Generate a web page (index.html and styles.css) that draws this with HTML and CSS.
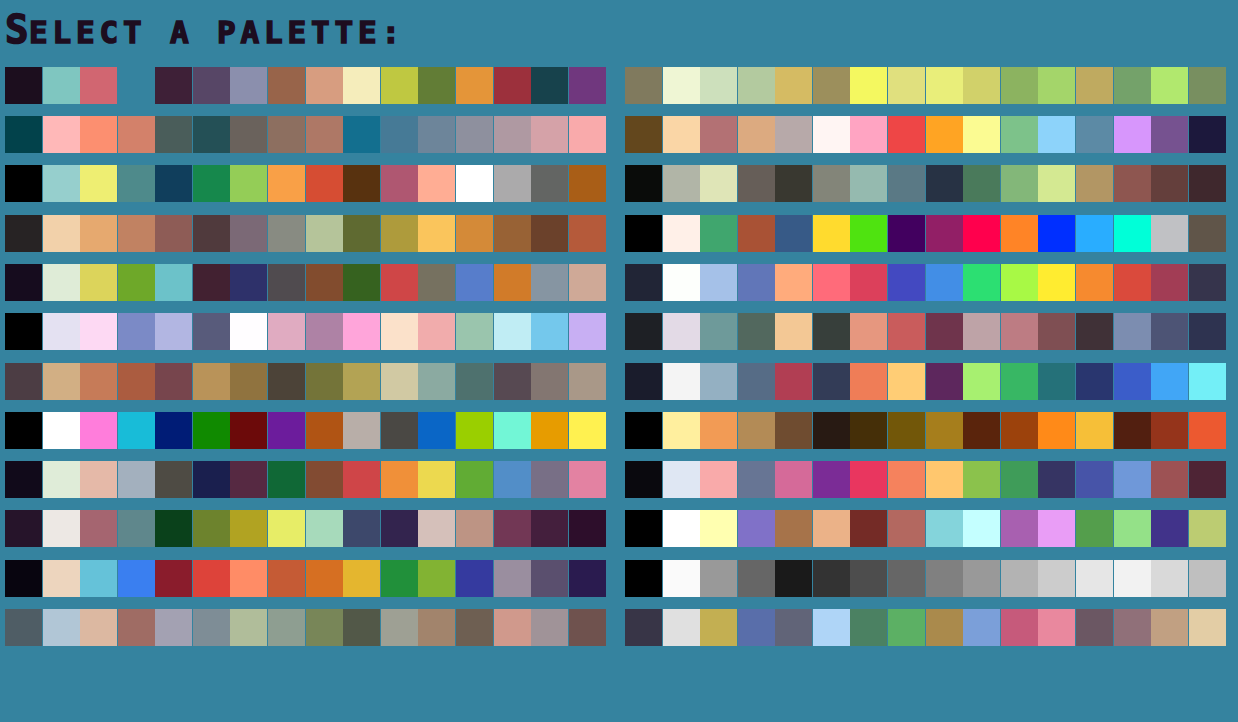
FILE: index.html
```html
<!DOCTYPE html>
<html lang="en">
<head>
    <meta charset="UTF-8">
    <meta name="viewport" content="width=device-width, initial-scale=1.0">
    <title>Select a palette</title>
    <link rel="stylesheet" href="styles.css">
</head>
<body>
    <h1 class="title">Select a palette:</h1>
    <div id="palettes" class="palettes"></div>
    <script src="palettes.js"></script>
</body>
</html>
```

FILE: styles.css
```css
html, body {
    height: 100%;
}

body {
    margin: 0;
    padding: 0 0 0 5px;
    background-color: #35839f;
    overflow: hidden;
}

.title {
    margin: 0;
    height: 66.8px;
    line-height: 60px;
    font-family: "DejaVu Sans Mono", monospace;
    font-size: 31px;
    font-weight: bold;
    letter-spacing: 4.84px;
    color: #1d0d1f;
    -webkit-text-stroke: 1.5px #1d0d1f;
    text-transform: uppercase;
    white-space: pre;
}

.title::first-letter {
    font-size: 39px;
    letter-spacing: 0.5px;
}

.palettes {
    display: grid;
    grid-template-columns: repeat(2, 600.7px);
    column-gap: 19.3px;
    row-gap: 12.3px;
}

.palette {
    display: flex;
    gap: 0.58px;
    height: 37px;
}

.swatch {
    flex: none;
    width: 37px;
    height: 37px;
}
```

FILE: palettes.js
```js
// one palette per line, left column then right column
const palettes = [
    "#1c0e1e #7fc6c0 #d16671 #35839f #3e2037 #574666 #8b8fad #98644a #d79d80 #f5edbb #bfc841 #627d36 #e49539 #9c303c #17424c #70377e",
    "#807a5e #eff6d4 #cde0bc #b3ca9f #d5bb63 #9c8f5c #f4f860 #e0e07e #e9ee7a #d1d16a #8cb360 #a4d56a #bfaa60 #74a26a #b1e86e #788f60",
    "#02424b #ffb8b8 #fc8f70 #d3816a #4a5d5a #245056 #6a625c #8d6f60 #ae7866 #136f8f #467a96 #6d859a #8e909e #af99a2 #d5a2a8 #f9aaab",
    "#63471d #fad6a6 #b37174 #dcaa80 #b7a9a9 #fff5f3 #ffa4c2 #ee4646 #ffa423 #fbfb92 #7dc28a #8dd3fa #5c8aa5 #d796fc #765290 #1c183c",
    "#000000 #96cfcd #eeee72 #4e8a8b #103e5c #16884c #94cd57 #f9a047 #d64d33 #58320f #af5771 #ffad94 #ffffff #abaaab #636563 #a95e17",
    "#0a0c0a #b1b5a7 #dfe5b7 #665e58 #393830 #838579 #95baaf #5a7985 #273244 #4a7a5b #83b779 #d4e992 #b29664 #8e5650 #643f3c #3f282d",
    "#272324 #f2d1aa #e6a96f #c18262 #8e5c56 #503a3d #7b6976 #888b82 #b5c49a #5f6a31 #ae9b3c #fac55c #d48a38 #986235 #6b412b #b55a3a",
    "#000000 #fff0e8 #40a66e #a95235 #375a87 #ffdb2e #4fe310 #42005f #921f66 #ff004d #ff8426 #002fff #29adff #00ffd8 #c0c1c4 #605549",
    "#160c1e #dfecd7 #dcd45b #6ea829 #6cc2c9 #422131 #2e316a #504b4f #824c2e #36621f #cf4647 #767160 #577dcb #d17b29 #8695a2 #cfa997",
    "#212536 #fdfffc #a5c1e8 #6176b8 #ffab7c #ff6b7a #dc405b #4349c1 #428ee6 #2cdf72 #a8f945 #ffec30 #f68a2f #da4a3c #a23d55 #36344c",
    "#000000 #e4e1f2 #fdd9f3 #7b8ac6 #b2b6e2 #585b7b #fffdff #e0abc1 #ae82a5 #ffa5da #fbe1ca #f1acac #9ac5ad #c0edf4 #74c8ec #c8aff3",
    "#1e2025 #e3dae6 #6e9a9a #52685e #f3c895 #373f3b #e6977f #c95c5c #6f344c #bea3a7 #bd7c83 #7f4f53 #403137 #7c8db0 #4d5475 #2e3350",
    "#4c3d44 #d2af84 #c67b58 #ab5c40 #77454d #b99359 #90733f #4c4338 #747439 #b3a354 #d1c9a3 #8baaa1 #4e716e #574952 #837671 #a99888",
    "#1a1c2c #f4f4f4 #94b0c2 #566c86 #b13e53 #333c57 #ef7d57 #ffcd75 #5d275d #a7f070 #38b764 #257179 #29366f #3b5dc9 #41a6f6 #73eff7",
    "#000000 #ffffff #ff7ddb #18bcd8 #001c76 #108a00 #6c0a0a #6c1c9c #b05414 #b8aea8 #4a4844 #0a66c6 #9acf00 #72f6d6 #e79c00 #fff150",
    "#000000 #ffef9e #f29b55 #b38b56 #6f4c30 #281a13 #452f08 #725709 #a67e1c #5a240c #9c420c #ff8a18 #f6bf38 #521f10 #95341b #ec5930",
    "#110a1a #dfecd8 #e5b9a8 #a3b0be #4e4b44 #1a1f4e #562942 #106836 #824b32 #cf4548 #f09039 #ecd94f #61ac34 #528ec8 #786f86 #e382a2",
    "#0a090e #dfe7f3 #f9aaaa #677594 #d56a99 #7b2c96 #e9365f #f5825d #ffc76e #8bc24c #3f9c59 #363463 #4754a8 #6f98d9 #9d5254 #4e2435",
    "#26142a #ede8e4 #a56570 #5f878c #0a411b #6d832d #b1a322 #e7ed67 #a7dabb #3d486b #33244e #d5c0ba #bd9484 #723755 #441f3d #2d0e2b",
    "#000000 #ffffff #ffffb0 #8071c8 #a6734a #ebb288 #742b26 #b36860 #84d4db #c4ffff #a860b0 #e99df6 #549e4c #94e188 #41338a #bccc72",
    "#08050f #edd5be #65c2d9 #3a7ff0 #8a1c2c #dd433a #ff8c66 #c55b35 #d66f22 #e4b62f #21903a #82b333 #353a9f #9a8e9f #5a4f6e #2a1b4f",
    "#000000 #fafafa #999999 #666666 #1a1a1a #333333 #4d4d4d #666666 #808080 #999999 #b3b3b3 #cccccc #e6e6e6 #f2f2f2 #d9d9d9 #bfbfbf",
    "#4f5d65 #b1c6d6 #dcb8a1 #9f6c64 #a3a1b2 #7e8d96 #b0bd9a #8e9e91 #788658 #525848 #9ea094 #a2846c #6e5f52 #d0998c #a09398 #6f524e",
    "#383547 #e0e0e0 #c3af52 #596eaa #616478 #afd5f7 #4b8162 #5cb064 #aa8a4c #7b9fd9 #c65a7b #e9889e #6b5763 #907079 #c1a082 #e3cda5"
];

const container = document.getElementById("palettes");

palettes.forEach((line) => {
    const row = document.createElement("div");
    row.className = "palette";
    line.split(" ").forEach((color) => {
        const swatch = document.createElement("div");
        swatch.className = "swatch";
        swatch.style.backgroundColor = color;
        row.appendChild(swatch);
    });
    container.appendChild(row);
});
```
